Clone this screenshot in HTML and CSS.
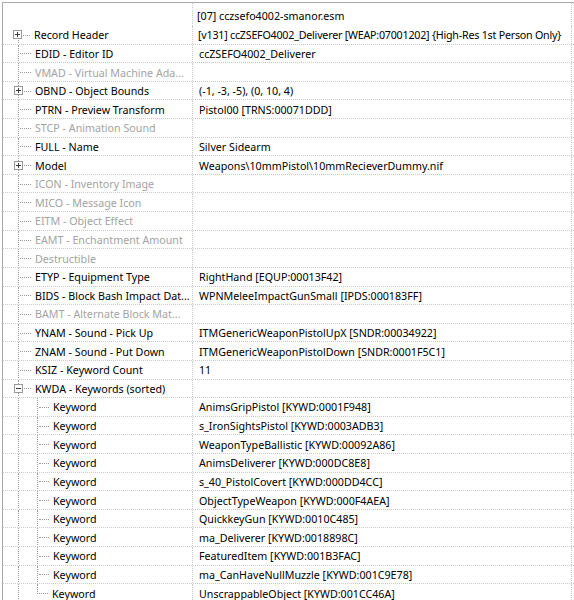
FILE: index.html
```html
<!DOCTYPE html>
<html>
<head>
<meta charset="utf-8">
<link rel="stylesheet" href="styles.css">
</head>
<body>
<div class="tree">
  <div class="row head">
    <div class="name"></div>
    <div class="val">[07] cczsefo4002-smanor.esm</div>
  </div>

  <div class="row"><div class="name"><span class="pad"></span><span class="br first"><span class="h"></span><span class="box plus"></span></span><span class="lbl">Record Header</span></div><div class="val tight">[v131] ccZSEFO4002_Deliverer [WEAP:07001202] {High-Res 1st Person Only}</div></div>
  <div class="row"><div class="name"><span class="pad"></span><span class="br"><span class="h"></span></span><span class="lbl">EDID - Editor ID</span></div><div class="val">ccZSEFO4002_Deliverer</div></div>
  <div class="row off"><div class="name"><span class="pad"></span><span class="br"><span class="h"></span></span><span class="lbl">VMAD - Virtual Machine Ada...</span></div><div class="val"></div></div>
  <div class="row"><div class="name"><span class="pad"></span><span class="br"><span class="h"></span><span class="box plus"></span></span><span class="lbl">OBND - Object Bounds</span></div><div class="val">(-1, -3, -5), (0, 10, 4)</div></div>
  <div class="row"><div class="name"><span class="pad"></span><span class="br"><span class="h"></span></span><span class="lbl">PTRN - Preview Transform</span></div><div class="val">Pistol00 [TRNS:00071DDD]</div></div>
  <div class="row off"><div class="name"><span class="pad"></span><span class="br"><span class="h"></span></span><span class="lbl">STCP - Animation Sound</span></div><div class="val"></div></div>
  <div class="row"><div class="name"><span class="pad"></span><span class="br"><span class="h"></span></span><span class="lbl">FULL - Name</span></div><div class="val">Silver Sidearm</div></div>
  <div class="row"><div class="name"><span class="pad"></span><span class="br"><span class="h"></span><span class="box plus"></span></span><span class="lbl">Model</span></div><div class="val">Weapons\10mmPistol\10mmRecieverDummy.nif</div></div>
  <div class="row off"><div class="name"><span class="pad"></span><span class="br"><span class="h"></span></span><span class="lbl">ICON - Inventory Image</span></div><div class="val"></div></div>
  <div class="row off"><div class="name"><span class="pad"></span><span class="br"><span class="h"></span></span><span class="lbl">MICO - Message Icon</span></div><div class="val"></div></div>
  <div class="row off"><div class="name"><span class="pad"></span><span class="br"><span class="h"></span></span><span class="lbl">EITM - Object Effect</span></div><div class="val"></div></div>
  <div class="row off"><div class="name"><span class="pad"></span><span class="br"><span class="h"></span></span><span class="lbl">EAMT - Enchantment Amount</span></div><div class="val"></div></div>
  <div class="row off"><div class="name"><span class="pad"></span><span class="br"><span class="h"></span></span><span class="lbl">Destructible</span></div><div class="val"></div></div>
  <div class="row"><div class="name"><span class="pad"></span><span class="br"><span class="h"></span></span><span class="lbl">ETYP - Equipment Type</span></div><div class="val">RightHand [EQUP:00013F42]</div></div>
  <div class="row"><div class="name"><span class="pad"></span><span class="br"><span class="h"></span></span><span class="lbl">BIDS - Block Bash Impact Dat...</span></div><div class="val">WPNMeleeImpactGunSmall [IPDS:000183FF]</div></div>
  <div class="row off"><div class="name"><span class="pad"></span><span class="br"><span class="h"></span></span><span class="lbl">BAMT - Alternate Block Mat...</span></div><div class="val"></div></div>
  <div class="row"><div class="name"><span class="pad"></span><span class="br"><span class="h"></span></span><span class="lbl">YNAM - Sound - Pick Up</span></div><div class="val">ITMGenericWeaponPistolUpX [SNDR:00034922]</div></div>
  <div class="row"><div class="name"><span class="pad"></span><span class="br"><span class="h"></span></span><span class="lbl">ZNAM - Sound - Put Down</span></div><div class="val">ITMGenericWeaponPistolDown [SNDR:0001F5C1]</div></div>
  <div class="row"><div class="name"><span class="pad"></span><span class="br"><span class="h"></span></span><span class="lbl">KSIZ - Keyword Count</span></div><div class="val">11</div></div>
  <div class="row"><div class="name"><span class="pad"></span><span class="br"><span class="h"></span><span class="box minus"></span></span><span class="lbl">KWDA - Keywords (sorted)</span></div><div class="val"></div></div>

  <div class="row"><div class="name"><span class="pad"></span><span class="vl"></span><span class="br sub"><span class="h"></span></span><span class="lbl">Keyword</span></div><div class="val">AnimsGripPistol [KYWD:0001F948]</div></div>
  <div class="row"><div class="name"><span class="pad"></span><span class="vl"></span><span class="br sub"><span class="h"></span></span><span class="lbl">Keyword</span></div><div class="val">s_IronSightsPistol [KYWD:0003ADB3]</div></div>
  <div class="row"><div class="name"><span class="pad"></span><span class="vl"></span><span class="br sub"><span class="h"></span></span><span class="lbl">Keyword</span></div><div class="val">WeaponTypeBallistic [KYWD:00092A86]</div></div>
  <div class="row"><div class="name"><span class="pad"></span><span class="vl"></span><span class="br sub"><span class="h"></span></span><span class="lbl">Keyword</span></div><div class="val">AnimsDeliverer [KYWD:000DC8E8]</div></div>
  <div class="row"><div class="name"><span class="pad"></span><span class="vl"></span><span class="br sub"><span class="h"></span></span><span class="lbl">Keyword</span></div><div class="val">s_40_PistolCovert [KYWD:000DD4CC]</div></div>
  <div class="row"><div class="name"><span class="pad"></span><span class="vl"></span><span class="br sub"><span class="h"></span></span><span class="lbl">Keyword</span></div><div class="val">ObjectTypeWeapon [KYWD:000F4AEA]</div></div>
  <div class="row"><div class="name"><span class="pad"></span><span class="vl"></span><span class="br sub"><span class="h"></span></span><span class="lbl">Keyword</span></div><div class="val">QuickkeyGun [KYWD:0010C485]</div></div>
  <div class="row"><div class="name"><span class="pad"></span><span class="vl"></span><span class="br sub"><span class="h"></span></span><span class="lbl">Keyword</span></div><div class="val">ma_Deliverer [KYWD:0018898C]</div></div>
  <div class="row"><div class="name"><span class="pad"></span><span class="vl"></span><span class="br sub"><span class="h"></span></span><span class="lbl">Keyword</span></div><div class="val">FeaturedItem [KYWD:001B3FAC]</div></div>
  <div class="row"><div class="name"><span class="pad"></span><span class="vl"></span><span class="br sub"><span class="h"></span></span><span class="lbl">Keyword</span></div><div class="val">ma_CanHaveNullMuzzle [KYWD:001C9E78]</div></div>
  <div class="row"><div class="name"><span class="pad"></span><span class="vl"></span><span class="br sub last"><span class="h"></span></span><span class="lbl">Keyword</span></div><div class="val">UnscrappableObject [KYWD:001CC46A]</div></div>
</div>
</body>
</html>
```

FILE: styles.css
```css
html, body {
  margin: 0;
  padding: 0;
  background: #ffffff;
  overflow: hidden;
}

.tree {
  margin: 2px 0 0 2px;
  border-top: 1px solid #a9a9a9;
  border-left: 1px solid #a9a9a9;
  font-family: "Noto Sans", "Liberation Sans", sans-serif;
  font-size: 10.7px;
  color: #000000;
  height: 620px;
}

.row {
  display: flex;
  height: 18.62px;
  box-sizing: border-box;
  border-bottom: 1px dotted #cacaca;
}

.row.head {
  height: 23px;
  border-bottom: none;
}

.name {
  width: 190px;
  flex: none;
  display: flex;
  align-items: stretch;
  border-right: 1px dotted #cacaca;
  box-sizing: border-box;
  overflow: hidden;
  white-space: nowrap;
}

.val {
  width: 379px;
  flex: none;
  box-sizing: border-box;
  border-right: 1px dotted #cacaca;
  padding-left: 6px;
  padding-top: 1px;
  display: flex;
  align-items: center;
  white-space: nowrap;
  overflow: hidden;
}

.val.tight {
  letter-spacing: -0.22px;
  padding-left: 5px;
}

.head .val {
  padding-left: 4px;
  padding-top: 3px;
}

.row.off .lbl {
  color: #a3a3a3;
}

.pad {
  width: 15px;
  flex: none;
}

.br {
  position: relative;
  width: 12px;
  flex: none;
  border-left: 1px dotted #9a9a9a;
  margin-bottom: -1px;
  display: flex;
  align-items: center;
}

.br.first {
  border-left: none;
  background-image: linear-gradient(#9a9a9a 50%, transparent 50%);
  background-size: 1px 2px;
  background-repeat: repeat-y;
  background-position: 0 0;
  background-clip: content-box;
  padding-top: 9px;
  box-sizing: border-box;
}

.br.first .h {
  margin-top: -9px;
}

.br .h {
  display: block;
  width: 11px;
  margin-left: 1px;
  border-top: 1px dotted #9a9a9a;
}

.br.sub {
  width: 11px;
}

.br.sub .h {
  width: 10px;
}

.br.last {
  border-left: none;
  align-items: flex-start;
}

.br.last .h {
  margin-left: 0;
  width: 11px;
  height: 9px;
  border-top: none;
  border-left: 1px dotted #9a9a9a;
  border-bottom: 1px dotted #9a9a9a;
  margin-top: 0;
}

.vl {
  width: 18px;
  flex: none;
  border-left: 1px dotted #9a9a9a;
  margin-bottom: -1px;
}

.lbl {
  display: flex;
  align-items: center;
  padding-left: 4px;
  padding-top: 1px;
}

.box {
  position: absolute;
  left: -5px;
  top: 50%;
  margin-top: -5px;
  width: 9px;
  height: 9px;
  box-sizing: border-box;
  border: 1px solid #999999;
  background: #ffffff;
}

.box::before {
  content: "";
  position: absolute;
  left: 1px;
  top: 3px;
  width: 5px;
  height: 1px;
  background: #3c3c3c;
}

.box.plus::after {
  content: "";
  position: absolute;
  left: 3px;
  top: 1px;
  width: 1px;
  height: 5px;
  background: #3c3c3c;
}
```
